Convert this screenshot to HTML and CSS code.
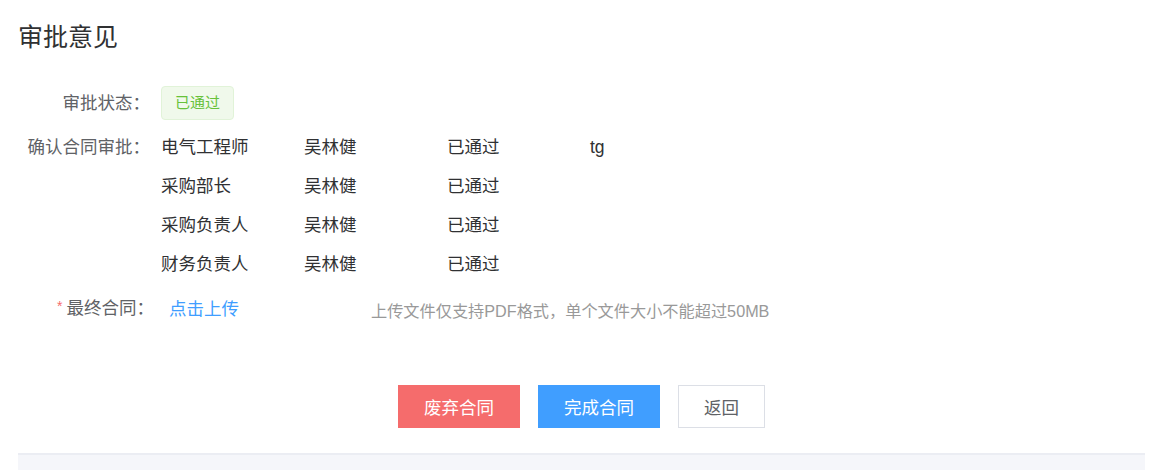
FILE: index.html
```html
<!DOCTYPE html>
<html lang="zh-CN">
<head>
  <meta charset="UTF-8">
  <title>审批意见</title>
  <link rel="stylesheet" href="styles.css">
</head>
<body>

<div class="page">
  <h2 class="title">审批意见</h2>

  <div class="form">
    <!-- 审批状态 -->
    <div class="row row-status">
      <div class="label">审批状态：</div>
      <div class="content">
        <span class="tag">已通过</span>
      </div>
    </div>

    <!-- 确认合同审批 -->
    <div class="row row-approve">
      <div class="label">确认合同审批：</div>
      <div class="content">
        <div class="approve-line">
          <span>电气工程师</span><span>吴林健</span><span>已通过</span><span>tg</span>
        </div>
        <div class="approve-line">
          <span>采购部长</span><span>吴林健</span><span>已通过</span><span></span>
        </div>
        <div class="approve-line">
          <span>采购负责人</span><span>吴林健</span><span>已通过</span><span></span>
        </div>
        <div class="approve-line">
          <span>财务负责人</span><span>吴林健</span><span>已通过</span><span></span>
        </div>
      </div>
    </div>

    <!-- 最终合同 -->
    <div class="row row-upload">
      <div class="label required">最终合同：</div>
      <div class="content upload">
        <a class="upload-btn">点击上传</a>
        <span class="upload-tip">上传文件仅支持PDF格式，单个文件大小不能超过50MB</span>
      </div>
    </div>
  </div>

  <div class="actions">
    <button class="btn btn-danger">废弃合同</button>
    <button class="btn btn-primary">完成合同</button>
    <button class="btn btn-default">返回</button>
  </div>

  <div class="footer-bar"></div>
</div>

</body>
</html>
```

FILE: styles.css
```css
* { margin: 0; padding: 0; box-sizing: border-box; }
body { background: #fff; color: #303133; font-family: "Liberation Sans", "Noto Sans CJK SC", sans-serif; overflow: hidden; }
.page { padding: 0 18px; }
.title { font-size: 25px; font-weight: 400; line-height: 32px; padding-top: 21px; color: #303133; }

.form { margin-top: 33px; }
.row { display: flex; }
.label { width: 132px; flex: none; text-align: right; font-size: 17.5px; color: #606266; margin-right: 11px; white-space: nowrap; }
.content { flex: 1; }

.row-status { align-items: center; height: 34px; }
.row-status .label { position: relative; top: -2px; }
.tag { display: inline-block; height: 34px; line-height: 32px; padding: 0 13px; font-size: 15px; color: #67c23a; background: #f0f9eb; border: 1px solid #e1f3d8; border-radius: 4px; }

.row-approve { margin-top: 8px; }
.row-approve .label { line-height: 39px; }
.approve-line { display: grid; grid-template-columns: repeat(4, 143px); font-size: 17.5px; line-height: 39px; color: #303133; }

.row-upload { margin-top: 5px; line-height: 39px; }
.row-upload .label { width: 136px; margin-right: 7px; }
.required::before { content: "*"; color: #f56c6c; font-size: 14px; margin-right: 4px; position: relative; top: -3px; }
.upload { display: flex; align-items: center; }
.upload-btn { width: 210px; padding-left: 8px; font-size: 17.5px; color: #409eff; cursor: pointer; }
.upload-tip { font-size: 16.2px; color: #999; position: relative; top: 2px; }

.actions { display: flex; justify-content: center; gap: 18px; margin-top: 56px; }
.btn { height: 43px; padding: 0 25px; font-size: 17.5px; font-family: inherit; border-radius: 0; border: 1px solid transparent; cursor: pointer; }
.btn-danger { background: #f56c6c; border-color: #f56c6c; color: #fff; }
.btn-primary { background: #409eff; border-color: #409eff; color: #fff; }
.btn-default { background: #fff; border-color: #dcdfe6; color: #606266; }

.footer-bar { margin-top: 25px; height: 30px; background: #f5f6fa; border-top: 2px solid #ebedf3; }
```
